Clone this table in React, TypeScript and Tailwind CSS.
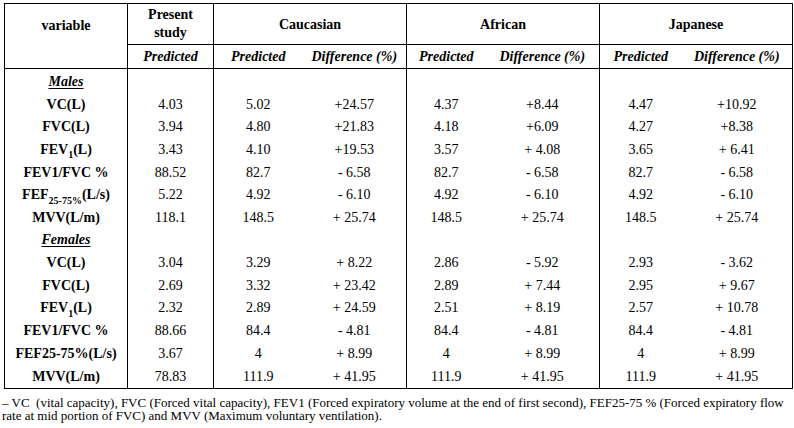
import React from 'react'

type Row = {
  label: React.ReactNode
  present: string
  values: string[]
  h: string
}

const males: Row[] = [
  { label: 'VC(L)', present: '4.03', values: ['5.02', '+24.57', '4.37', '+8.44', '4.47', '+10.92'], h: 'h-[22px]' },
  { label: 'FVC(L)', present: '3.94', values: ['4.80', '+21.83', '4.18', '+6.09', '4.27', '+8.38'], h: 'h-[22px]' },
  {
    label: (
      <>
        FEV<sub className="text-[10px] align-[-2px]">1</sub>(L)
      </>
    ),
    present: '3.43',
    values: ['4.10', '+19.53', '3.57', '+ 4.08', '3.65', '+ 6.41'],
    h: 'h-[23px]',
  },
  { label: 'FEV1/FVC %', present: '88.52', values: ['82.7', '- 6.58', '82.7', '- 6.58', '82.7', '- 6.58'], h: 'h-[23px]' },
  {
    label: (
      <>
        FEF<sub className="text-[10px] align-[-2px]">25-75%</sub>(L/s)
      </>
    ),
    present: '5.22',
    values: ['4.92', '- 6.10', '4.92', '- 6.10', '4.92', '- 6.10'],
    h: 'h-[22px]',
  },
  { label: 'MVV(L/m)', present: '118.1', values: ['148.5', '+ 25.74', '148.5', '+ 25.74', '148.5', '+ 25.74'], h: 'h-[23px]' },
]

const females: Row[] = [
  { label: 'VC(L)', present: '3.04', values: ['3.29', '+ 8.22', '2.86', '- 5.92', '2.93', '- 3.62'], h: 'h-[23px]' },
  { label: 'FVC(L)', present: '2.69', values: ['3.32', '+ 23.42', '2.89', '+ 7.44', '2.95', '+ 9.67'], h: 'h-[23px]' },
  {
    label: (
      <>
        FEV<sub className="text-[10px] align-[-2px]">1</sub>(L)
      </>
    ),
    present: '2.32',
    values: ['2.89', '+ 24.59', '2.51', '+ 8.19', '2.57', '+ 10.78'],
    h: 'h-[22px]',
  },
  { label: 'FEV1/FVC %', present: '88.66', values: ['84.4', '- 4.81', '84.4', '- 4.81', '84.4', '- 4.81'], h: 'h-[23px]' },
  { label: 'FEF25-75%(L/s)', present: '3.67', values: ['4', '+ 8.99', '4', '+ 8.99', '4', '+ 8.99'], h: 'h-[23px]' },
  { label: 'MVV(L/m)', present: '78.83', values: ['111.9', '+ 41.95', '111.9', '+ 41.95', '111.9', '+ 41.95'], h: 'h-[24px]' },
]

function DataRow({ row }: { row: Row }) {
  const [cp, cd, ap, ad, jp, jd] = row.values
  return (
    <tr className={row.h}>
      <td className="border-x border-black text-center font-bold">{row.label}</td>
      <td className="border-x border-black text-center">{row.present}</td>
      <td className="border-l border-black text-center">{cp}</td>
      <td className="border-r border-black text-center">{cd}</td>
      <td className="border-l border-black text-center">{ap}</td>
      <td className="border-r border-black text-center">{ad}</td>
      <td className="border-l border-black text-center">{jp}</td>
      <td className="border-r border-black text-center">{jd}</td>
    </tr>
  )
}

function GroupRow({ name, h }: { name: string; h: string }) {
  return (
    <tr className={h}>
      <td className="border-x border-black text-center font-bold italic underline underline-offset-2">{name}</td>
      <td className="border-x border-black" />
      <td className="border-l border-black" colSpan={2} />
      <td className="border-x border-black" colSpan={2} />
      <td className="border-r border-black" colSpan={2} />
    </tr>
  )
}

export default function App() {
  return (
    <div className="w-[794px] h-[428px] bg-white text-black font-['Liberation_Serif',serif] pt-[3px] pl-[4px]">
      <table className="table-fixed border-collapse w-[788px] font-['Liberation_Serif',serif] text-[14px] leading-[17px]">
        <colgroup>
          <col className="w-[123px]" />
          <col className="w-[86px]" />
          <col className="w-[89px]" />
          <col className="w-[104px]" />
          <col className="w-[79px]" />
          <col className="w-[114px]" />
          <col className="w-[82px]" />
          <col className="w-[111px]" />
        </colgroup>
        <thead>
          <tr className="h-[41px] font-bold">
            <td rowSpan={2} className="border border-black text-center align-top pt-[13px]">
              variable
            </td>
            <td className="border border-black text-center leading-[18px]">
              Present
              <br />
              study
            </td>
            <td colSpan={2} className="border border-black text-center">
              Caucasian
            </td>
            <td colSpan={2} className="border border-black text-center">
              African
            </td>
            <td colSpan={2} className="border border-black text-center">
              Japanese
            </td>
          </tr>
          <tr className="h-[24px] font-bold italic">
            <td className="border border-black text-center">Predicted</td>
            <td className="border-y border-l border-black text-center">Predicted</td>
            <td className="border-y border-r border-black text-center">Difference (%)</td>
            <td className="border-y border-l border-black text-center">Predicted</td>
            <td className="border-y border-r border-black text-center">Difference (%)</td>
            <td className="border-y border-l border-black text-center">Predicted</td>
            <td className="border-y border-r border-black text-center">Difference (%)</td>
          </tr>
        </thead>
        <tbody className="border-b border-black">
          <GroupRow name="Males" h="h-[25px]" />
          {males.map((r, i) => (
            <DataRow key={'m' + i} row={r} />
          ))}
          <GroupRow name="Females" h="h-[22px]" />
          {females.map((r, i) => (
            <DataRow key={'f' + i} row={r} />
          ))}
        </tbody>
      </table>

      {/* Footnote */}
      <p className="mt-[7px] -ml-[2px] whitespace-nowrap text-[13px] leading-[13px]">
        – VC&nbsp; (vital capacity), FVC (Forced vital capacity), FEV1 (Forced expiratory volume at the end of first second), FEF25-75 % (Forced expiratory flow
        <br />
        rate at mid portion of FVC) and MVV (Maximum voluntary ventilation).
      </p>
    </div>
  )
}
